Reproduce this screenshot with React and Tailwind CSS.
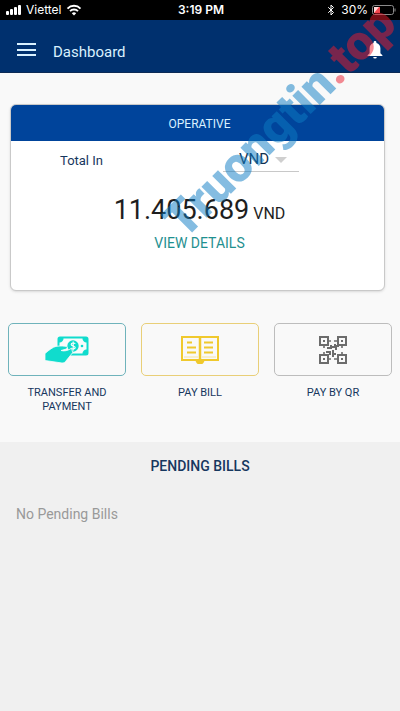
import React, { useState } from 'react'
import { Bluetooth } from 'lucide-react'

const SignalIcon = () => (
  <svg className="w-4 h-3" viewBox="0 0 16 12" fill="currentColor" aria-hidden="true">
    <rect x="0" y="7" width="3" height="4" rx="1" />
    <rect x="4" y="5" width="3" height="6" rx="1" />
    <rect x="8" y="3" width="3" height="8" rx="1" />
    <rect x="12" y="1" width="3" height="10" rx="1" />
  </svg>
)

const WifiIcon = () => (
  <svg className="w-4 h-3" viewBox="0 0 16 12" fill="none" stroke="currentColor" strokeWidth="1.9" aria-hidden="true">
    <path d="M1.5 4.6a9 9 0 0 1 13 0" />
    <path d="M4 7.2a5.6 5.6 0 0 1 8 0" />
    <path d="M8 11.4 5.8 9.2a3.2 3.2 0 0 1 4.4 0z" fill="currentColor" stroke="none" />
  </svg>
)

const BatteryIcon = () => (
  <svg className="w-6 h-3" viewBox="0 0 24 12" aria-hidden="true">
    <rect x="0.5" y="1.5" width="21" height="9" rx="2" fill="none" stroke="#8b8b8b" />
    <rect x="2" y="3" width="6" height="6" fill="#f5484e" />
    <path d="M2 9V3h5z" fill="#ffd9d9" />
    <path d="M23 4.5v3" stroke="#8b8b8b" />
  </svg>
)

const MenuIcon = () => (
  <svg className="w-5 h-4" viewBox="0 0 20 16" fill="#d9f1ff" aria-hidden="true">
    <rect x="0" y="1" width="19" height="2" />
    <rect x="0" y="7" width="19" height="2" />
    <rect x="0" y="12" width="19" height="2" />
  </svg>
)

const BellIcon = () => (
  <svg className="w-4 h-5" viewBox="0 0 16 20" fill="#fff" aria-hidden="true">
    <path d="M8 1c.9 0 1.4.6 1.4 1.4v.7c2.6.6 4 2.8 4 5.4v4.7l2 2V16H.6v-.8l2-2V8.5c0-2.6 1.4-4.8 4-5.4v-.7C6.6 1.6 7.1 1 8 1z" />
    <path d="M6.2 17h3.6a1.8 1.6 0 0 1-3.6 0z" />
  </svg>
)

const TransferIcon = () => (
  <svg className="w-11 h-7" viewBox="0 0 44 28" aria-hidden="true">
    <rect x="13.5" y="1.5" width="29" height="17" rx="1.5" fill="#f9fbfb" stroke="#10dccd" strokeWidth="2" />
    <path d="M14 2h4.5a4 4 0 0 1-4.5 4.5zM42 2h-4.5a4 4 0 0 0 4.5 4.5zM42 18h-4.5a4 4 0 0 1 4.5-4.5z" fill="#10dccd" />
    <circle cx="28" cy="10" r="5.7" fill="#10dccd" />
    <circle cx="37" cy="10" r="1.3" fill="#10dccd" />
    <path d="M30.2 7.8c-.5-1-4-1.3-4 .6 0 2 4 1.2 4 3.2 0 1.9-3.7 1.7-4.3.5M28.2 5.5v9" fill="none" stroke="#f9fbfb" strokeWidth="1.2" />
    <path d="M0 17.5C4 14 8 11 11 10.4c4-.7 9-.4 10.6.2 1.2.6.6 2.2-.6 2.5l-5 1.4c3 1 7 .2 10.5-2.2l1.2 4.3-7.2 8.9c-1 1.2-2 1.5-3.5 1.5L0 24.5z" fill="#10dccd" stroke="#f9fbfb" strokeWidth="0.8" />
  </svg>
)

const BillIcon = () => (
  <svg className="w-10 h-7" viewBox="0 0 40 28" fill="none" stroke="#f0c92d" strokeWidth="2" aria-hidden="true">
    <path d="M2 1h36v23H2z" />
    <path d="M20 1v24" strokeWidth="2.5" />
    <path d="M16.5 24h7a3.5 3.5 0 0 1-7 0z" fill="#f0c92d" />
    <path d="M7 6.5h5M7 11.5h9M7 16.5h9M24 6.5h9M24 11.5h9M24 16.5h9" />
    <path d="M4 21h14M22 21h14" stroke="#f6e5a0" strokeWidth="1" />
  </svg>
)

const QrIcon = () => (
  <svg className="w-7 h-7" viewBox="0 0 28 28" aria-hidden="true">
    <g fill="none" stroke="#6c6c6c" strokeWidth="2">
      <path d="M1 1h8v8H1zM19 1h8v8h-8zM1 19h8v8H1zM19 19h8v8h-8z" />
      <path d="M9 5h3M15 5h4M5 9v3M23 9v3M23 16v3M5 16v3M9 23h3M15 23h4" strokeWidth="1.6" />
      <path d="M12 9v3H8M16 8v3h-3M20 10h-3v4M7 16h4v3M14 14v4h3M14 21v-2" />
    </g>
    <path d="M4 4h2v2H4zM22 4h2v2h-2zM4 22h2v2H4zM22 22h2v2h-2z" fill="#6c6c6c" />
  </svg>
)

const ACTIONS = [
  { label: 'TRANSFER AND PAYMENT', icon: TransferIcon, border: 'border-[#6fb3bb]' },
  { label: 'PAY BILL', icon: BillIcon, border: 'border-[#e9cf78]' },
  { label: 'PAY BY QR', icon: QrIcon, border: 'border-[#bdbdbd]' },
]

const App = () => {
  const [currency, setCurrency] = useState('VND')

  return (
    <div className="relative min-h-screen flex flex-col overflow-hidden bg-[#f9f9f9] font-['Roboto',sans-serif] text-[#17375e]">
      {/* Status bar */}
      <div className="grid grid-cols-[1fr_auto_1fr] items-center h-5 pl-1.5 pr-1 bg-black text-white font-['Inter',sans-serif] text-xs">
        <div className="flex items-center gap-1">
          <SignalIcon />
          <span>Viettel</span>
          <WifiIcon />
        </div>
        <span className="font-semibold">3:19 PM</span>
        <div className="flex items-center justify-end gap-1">
          <Bluetooth size={12} strokeWidth={2} />
          <span>30%</span>
          <BatteryIcon />
        </div>
      </div>

      {/* Header */}
      <header className="flex items-center h-[53px] px-[17px] pt-2 bg-[#00306e] border-b border-[#0c2a55]">
        <button type="button" aria-label="Menu" className="mr-4">
          <MenuIcon />
        </button>
        <h1 className="flex-1 pt-1 text-[15px] text-[#d9f1ff]">Dashboard</h1>
        <button type="button" aria-label="Notifications">
          <BellIcon />
        </button>
      </header>

      <main className="flex-1 flex flex-col">
        {/* Balance card */}
        <section className="mt-[31px] ml-2.5 mr-[15px] h-[187px] rounded-md border border-[#c9c9c9] bg-white shadow overflow-hidden">
          <h2 className="h-9 flex items-center justify-center pl-1 pt-0.5 bg-[#00449b] text-xs text-[#d9f1ff]">OPERATIVE</h2>
          <div className="flex items-start justify-between pl-[49px] pr-[85px] pt-1.5">
            <label htmlFor="currency" className="pt-1 text-[13px] leading-5">Total In</label>
            <div className="relative w-[76px] border-b border-[#c8c8c8]">
              <select
                id="currency"
                value={currency}
                onChange={e => setCurrency(e.target.value)}
                className="block appearance-none w-full h-6 pl-4 bg-transparent text-[15px] leading-6 text-[#12304f]"
              >
                <option>VND</option>
                <option>USD</option>
              </select>
              <span className="pointer-events-none absolute right-3 top-2.5 border-x-[6px] border-t-[6px] border-x-transparent border-t-[#cfcfcf]" />
            </div>
          </div>
          <p className="mt-[22px] pl-1 flex items-baseline justify-center gap-1 leading-8 text-[#1e1e1e]">
            <span className="text-[27px]">11.405.689</span>
            <span className="text-base">VND</span>
          </p>
          <div className="mt-[5px] pl-1 text-center">
            <a href="#details" className="text-sm text-[#1f9090]">VIEW DETAILS</a>
          </div>
        </section>

        {/* Quick actions */}
        <div className="grid grid-cols-3 gap-[15px] mt-8 px-2">
          {ACTIONS.map(({ label, icon: Icon, border }) => (
            <button key={label} type="button" className="flex flex-col items-center text-[11px] leading-[14px]">
              <span className={`w-full h-[53px] flex items-center justify-center rounded-[5px] border ${border}`}>
                <Icon />
              </span>
              <span className="mt-2.5 px-4">{label}</span>
            </button>
          ))}
        </div>

        {/* Pending bills */}
        <section className="flex-1 mt-7 pt-3 px-4 bg-[#f0f0f0]">
          <h2 className="text-center text-sm leading-6 font-medium">PENDING BILLS</h2>
          <p className="mt-6 text-sm leading-6 text-[#999]">No Pending Bills</p>
        </section>
      </main>

      <div
        aria-hidden="true"
        className="pointer-events-none absolute left-[190px] top-[198px] origin-bottom-left -rotate-45 whitespace-nowrap font-['Roboto',sans-serif] font-black text-[49px] leading-[48px] opacity-50"
      >
        <span className="text-[#0c7cc4]">Truongtin</span>
        <span className="text-[#ed1c2e]">.top</span>
      </div>
    </div>
  )
}

export default App
